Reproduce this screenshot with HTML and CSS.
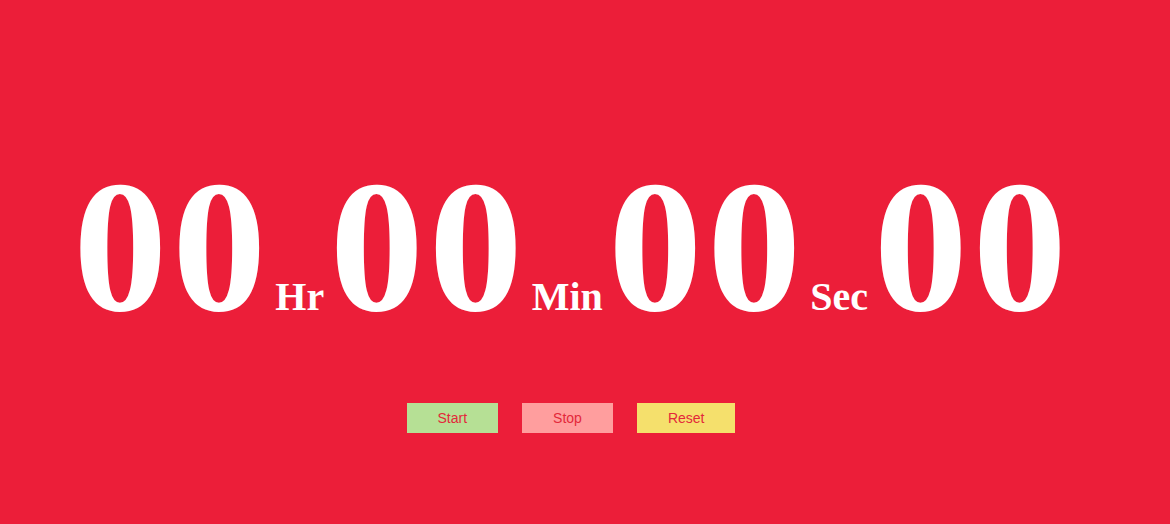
FILE: index.html
```html
<!DOCTYPE html>
<html>
<head>
<meta charset="utf-8">
<link rel="stylesheet" href="styles.css">
</head>
<body>
<main class="watch">
  <div class="clock">
    <span class="num">00</span><span class="unit">Hr</span>
    <span class="num">00</span><span class="unit">Min</span>
    <span class="num">00</span><span class="unit">Sec</span>
    <span class="num">00</span>
  </div>
  <div class="controls">
    <button class="btn btn-start">Start</button>
    <button class="btn btn-stop">Stop</button>
    <button class="btn btn-reset">Reset</button>
  </div>
</main>
</body>
</html>
```

FILE: styles.css
```css
html, body {
  margin: 0;
  padding: 0;
  background: #ec1e39;
  height: 100%;
}
.watch {
  display: flex;
  flex-direction: column;
  align-items: center;
  padding-top: 153px;
  padding-right: 21px;
}
.clock {
  display: flex;
  align-items: baseline;
  color: #ffffff;
  font-family: "Liberation Serif", "Times New Roman", serif;
  font-weight: bold;
}
.num {
  font-size: 188px;
  line-height: 188px;
  letter-spacing: 5px;
  margin-right: 4px;
}
.unit {
  font-size: 40px;
  line-height: 40px;
  margin-right: 5.5px;
}
.controls {
  display: flex;
  gap: 24px;
  margin-top: 62px;
  margin-right: 7px;
}
.btn {
  height: 30px;
  padding: 0 31px;
  border: none;
  margin: 0;
  font-family: "Liberation Sans", Arial, sans-serif;
  font-size: 14px;
  color: #e3283a;
  cursor: pointer;
}
.btn-start { background: #b6e095; }
.btn-stop { background: #ff9e9e; }
.btn-reset { background: #f5e06c; }
```
